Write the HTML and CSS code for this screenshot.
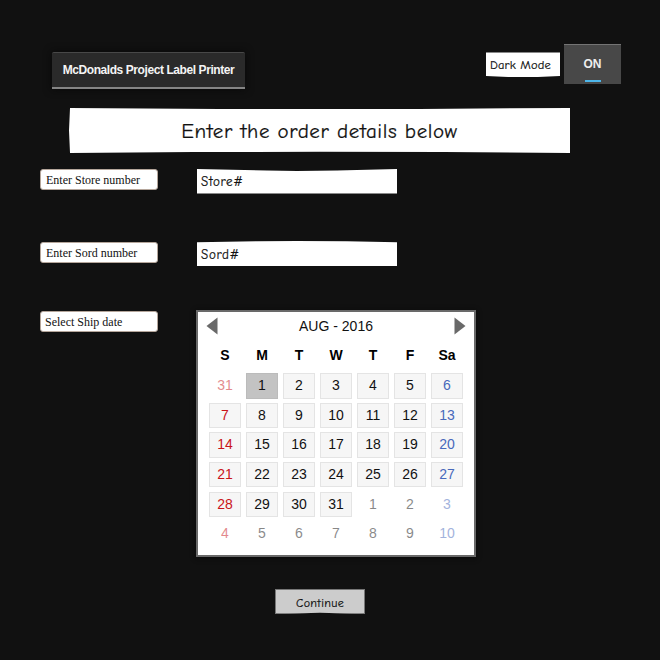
FILE: index.html
```
<!DOCTYPE html>
<html lang="en">
<head>
<meta charset="utf-8">
<title>McDonalds Project Label Printer</title>
<link rel="stylesheet" href="styles.css">
</head>
<body>
<header class="topbar">
  <div class="brand"><span>McDonalds Project Label Printer</span></div>
  <div class="mode sketch">Dark Mode</div>
  <button class="toggle"><span>ON</span></button>
</header>
<h1 class="heading sketch"><span>Enter the order details below</span></h1>
<main class="form">
  <div class="row"><label class="tag">Enter Store number</label><div class="field sketch">Store#</div></div>
  <div class="row sord"><label class="tag">Enter Sord number</label><div class="field field-sord sketch">Sord#</div></div>
  <div class="row date"><label class="tag tag-date">Select Ship date</label>
    <section class="calendar">
      <div class="month">
        <svg width="12" height="18" viewBox="0 0 12 18"><path d="M11.5 0.5V17.5L0.5 9Z"/></svg>
        <span>AUG - 2016</span>
        <svg width="12" height="18" viewBox="0 0 12 18"><path d="M0.5 0.5V17.5L11.5 9Z"/></svg>
      </div>
      <div class="weekdays"><b>S</b><b>M</b><b>T</b><b>W</b><b>T</b><b>F</b><b>Sa</b></div>
      <div class="days">
        <span class="out">31</span><span class="selected">1</span><span>2</span><span>3</span><span>4</span><span>5</span><span>6</span>
        <span>7</span><span>8</span><span>9</span><span>10</span><span>11</span><span>12</span><span>13</span>
        <span>14</span><span>15</span><span>16</span><span>17</span><span>18</span><span>19</span><span>20</span>
        <span>21</span><span>22</span><span>23</span><span>24</span><span>25</span><span>26</span><span>27</span>
        <span>28</span><span>29</span><span>30</span><span>31</span><span class="out">1</span><span class="out">2</span><span class="out">3</span>
        <span class="out">4</span><span class="out">5</span><span class="out">6</span><span class="out">7</span><span class="out">8</span><span class="out">9</span><span class="out">10</span>
      </div>
    </section>
  </div>
</main>
<button class="continue sketch">Continue</button>
</body>
</html>
```
FILE: styles.css
```
* { box-sizing: border-box; }
body {
  margin: 0;
  width: 660px;
  height: 660px;
  padding-top: 44px;
  background: #111;
  color: #111;
  overflow: hidden;
  font-family: "Liberation Sans", Arial, sans-serif;
}
button { border: 0; padding: 0; }
.sketch {
  font-family: "Comic Sans MS", "Comic Neue", "Noto Sans", sans-serif;
  white-space: nowrap;
  -webkit-text-stroke: 0.2px currentColor;
}

.topbar { display: flex; height: 40px; padding: 0 39px 0 52px; align-items: flex-start; }
.brand {
  width: 193px;
  height: 37px;
  margin-top: 8px;
  border-top: 1px solid #484848;
  border-bottom: 2px solid #858585;
  border-radius: 2px 2px 0 0;
  background: #2a2a2a;
  color: #f4f4f4;
  box-shadow: 0 0 8px #080808;
  font-size: 12px;
  font-weight: bold;
  line-height: 34px;
  text-align: center;
  white-space: nowrap;
}
.brand span { letter-spacing: -0.42px; }
.mode {
  width: 74px;
  height: 25px;
  margin: 8px 4px 0 auto;
  padding-left: 4px;
  background: #fff;
  font-size: 12.5px;
  line-height: 26px;
  letter-spacing: 0.15px;
  clip-path: polygon(0 2%, 100% 2%, 100% 96%, 70% 100%, 30% 100%, 0 96%);
}
.toggle {
  display: flex;
  flex-direction: column;
  align-items: center;
  width: 57px;
  height: 40px;
  padding-top: 12px;
  border-top: 1px solid #747474;
  background: #484848;
  color: #eee;
  font: bold 12px/14px "Liberation Sans", Arial, sans-serif;
}
.toggle::after {
  content: "";
  width: 16px;
  height: 2px;
  margin-top: 9px;
  background: #4db6ea;
}

.heading {
  width: 501px;
  height: 45px;
  margin: 24px 0 0 69px;
  background: #fff;
  font-size: 21px;
  font-weight: normal;
  line-height: 46px;
  letter-spacing: 0.6px;
  text-align: center;
  clip-path: polygon(0.2% 0, 30% 2%, 70% 2%, 100% 0, 100% 100%, 75% 98%, 50% 97%, 25% 98%, 0.2% 100%, 0 50%);
}
.form { padding: 16px 0 0 40px; }
.row { display: flex; height: 72px; align-items: flex-start; }
.tag {
  width: 118px;
  height: 21px;
  margin-right: 39px;
  padding-left: 5px;
  border: 1px solid #b5a69b;
  border-radius: 3px;
  background: #fff;
  font: 12px/20px "Liberation Serif", "Times New Roman", serif;
  white-space: nowrap;
}
.tag-date { padding-left: 4px; margin-top: 1px; margin-right: 38px; }
.field {
  width: 200px;
  height: 25px;
  padding-left: 4px;
  background: #fff;
  font-size: 13px;
  line-height: 26px;
  letter-spacing: 0.7px;
  clip-path: polygon(0 0, 35% 6%, 50% 8%, 70% 6%, 100% 0, 100% 98%, 0 98%);
}
.sord { height: 69px; padding-top: 1px; }
.field-sord {
  margin-top: -1px;
  line-height: 27px;
  clip-path: polygon(0 5%, 30% 1%, 50% 0, 75% 1%, 100% 5%, 100% 100%, 0 100%);
}
.date { height: 247px; }
.calendar {
  width: 280px;
  height: 247px;
  border: 2px solid #696969;
  background: #fff;
  font-size: 14px;
  box-shadow: 0 1px 5px #080808;
}
.month { display: flex; height: 28px; padding: 0 8px; justify-content: space-between; align-items: center; }
.month svg { fill: #696969; }
.weekdays, .days { display: grid; grid-template-columns: repeat(7, 32px); column-gap: 5px; margin-left: 11px; text-align: center; }
.weekdays { height: 33px; line-height: 30px; color: #000; }
.days { grid-auto-rows: 25.5px; row-gap: 4.15px; }
.days span { border: 1px solid #e4e4e4; background: #f6f6f6; line-height: 22px; }
.days span:nth-child(7n + 1) { color: #c91419; }
.days span:nth-child(7n) { color: #4869bb; }
.days .selected { border-color: #bbb; background: #c3c3c3; }
.days .out { border-color: transparent; background: none; opacity: 0.5; }
.continue {
  display: block;
  width: 90px;
  height: 25px;
  margin: 32px 0 0 275px;
  padding-top: 2px;
  border: 1px solid #777;
  background: #ccc;
  color: #111;
  font-size: 12px;
  line-height: 23px;
  letter-spacing: 0.35px;
  clip-path: polygon(0 0, 100% 0, 100% 100%, 70% 97%, 50% 95%, 30% 97%, 0 100%);
}
```
